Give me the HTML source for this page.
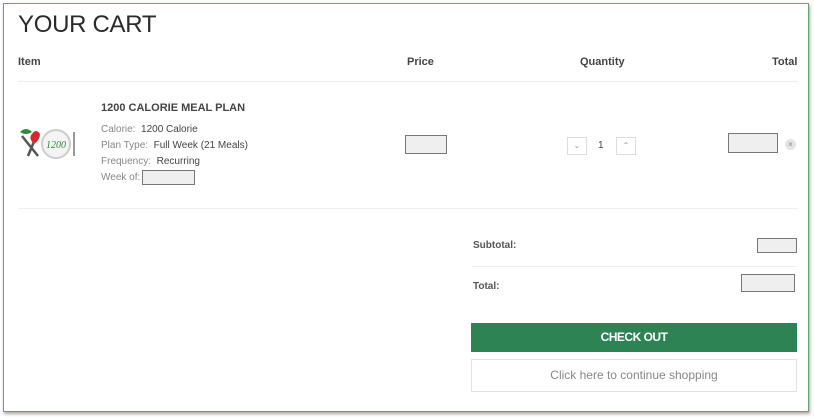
<!DOCTYPE html>
<html><head><meta charset="utf-8"><style>
*{margin:0;padding:0;box-sizing:border-box}
body{width:814px;height:417px;background:#fff;font-family:"Liberation Sans",sans-serif;position:relative;overflow:hidden;color:#333}
.frame{position:absolute;left:3px;top:3px;width:806px;height:409px;border:1px solid #5fa56f;box-shadow:1px 2px 3px rgba(0,0,0,.35)}
.a{position:absolute}
h1{position:absolute;left:18px;top:11px;font-size:24px;font-weight:normal;color:#2a2a2a;letter-spacing:-0.3px}
.th{font-size:11px;font-weight:bold;color:#444;top:56px}
.line{position:absolute;height:1px;background:#eee}
.lbl{font-size:10px;color:#888}
.lbl b{font-weight:normal;color:#444}
.box{position:absolute;border:1px solid #777;background:#efefef}
.qb{position:absolute;width:20px;height:18px;border:1px solid #ddd;font-size:8px;color:#999;text-align:center;line-height:16px}
</style></head><body>
<div class="frame"></div>
<h1>YOUR CART</h1>
<div class="a th" style="left:18px">Item</div>
<div class="a th" style="left:407px">Price</div>
<div class="a th" style="left:580px">Quantity</div>
<div class="a th" style="left:772px">Total</div>
<div class="line" style="left:18px;top:81px;width:780px"></div>
<svg class="a" style="left:18px;top:126px" width="64" height="36" viewBox="0 0 64 36">
<path d="M4 10 L20 30 M20 6 L10 30" stroke="#555" stroke-width="2.5"/>
<path d="M2 6 Q8 0 14 6 Q8 10 2 6Z" fill="#2e8b3e"/>
<path d="M14 8 Q18 2 22 8 Q22 14 16 18 Q10 12 14 8Z" fill="#d62a2a"/>
<circle cx="38" cy="18" r="14" fill="#f4f4f4" stroke="#ccc" stroke-width="2"/>
<text x="38" y="22" font-size="10" font-style="italic" fill="#2e8b3e" text-anchor="middle" font-family="Liberation Serif,serif">1200</text>
<rect x="55" y="6" width="2" height="24" fill="#999"/>
</svg>
<div class="a" style="left:101px;top:102px;font-size:11px;font-weight:bold;color:#444">1200 CALORIE MEAL PLAN</div>
<div class="a lbl" style="left:101px;top:124px">Calorie:&nbsp; <b>1200 Calorie</b></div>
<div class="a lbl" style="left:101px;top:140px">Plan Type:&nbsp; <b>Full Week (21 Meals)</b></div>
<div class="a lbl" style="left:101px;top:156px">Frequency:&nbsp; <b>Recurring</b></div>
<div class="a lbl" style="left:101px;top:172px">Week of:</div>
<div class="box" style="left:142px;top:170px;width:53px;height:15px"></div>
<div class="box" style="left:405px;top:135px;width:42px;height:19px"></div>
<div class="qb" style="left:567px;top:137px">&#8964;</div>
<div class="a" style="left:598px;top:140px;font-size:10px;color:#444">1</div>
<div class="qb" style="left:616px;top:137px">&#8963;</div>
<div class="box" style="left:728px;top:133px;width:50px;height:20px"></div>
<div class="a" style="left:785px;top:139px;width:11px;height:11px;border-radius:50%;background:#e4e4e4;color:#888;font-size:8px;text-align:center;line-height:11px">×</div>
<div class="line" style="left:18px;top:208px;width:780px"></div>
<div class="a" style="left:473px;top:240px;font-size:10px;font-weight:bold;color:#555">Subtotal:</div>
<div class="box" style="left:757px;top:238px;width:40px;height:15px"></div>
<div class="line" style="left:472px;top:266px;width:325px"></div>
<div class="a" style="left:473px;top:281px;font-size:10px;font-weight:bold;color:#555">Total:</div>
<div class="box" style="left:741px;top:274px;width:54px;height:18px"></div>
<div class="a" style="left:471px;top:323px;width:326px;height:29px;background:#2d8354;color:#fff;font-size:12px;font-weight:bold;text-align:center;line-height:29px;letter-spacing:-0.5px">CHECK OUT</div>
<div class="a" style="left:471px;top:359px;width:326px;height:33px;border:1px solid #e2e2e2;color:#888;font-size:12px;text-align:center;line-height:31px">Click here to continue shopping</div>
</body></html>
